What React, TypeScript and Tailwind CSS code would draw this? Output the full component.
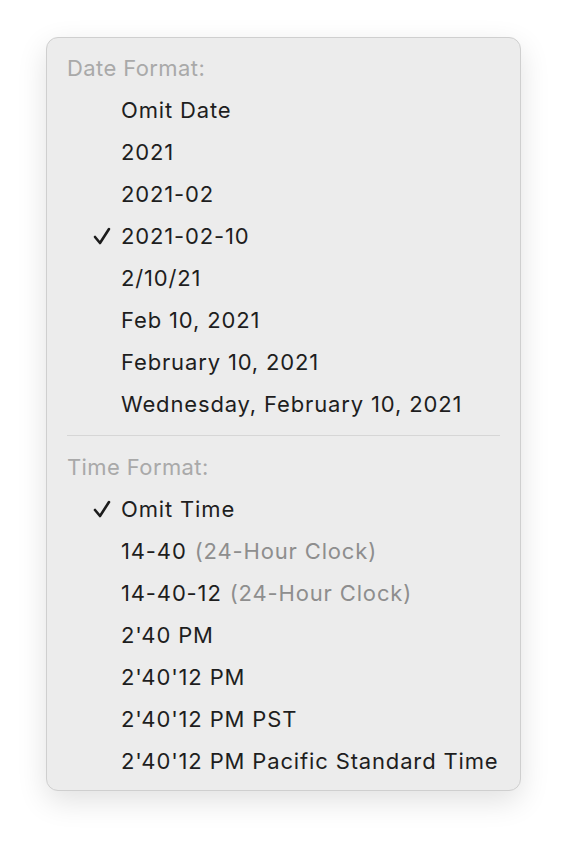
const dateItems = [
  "Omit Date",
  "2021",
  "2021-02",
  "2021-02-10",
  "2/10/21",
  "Feb 10, 2021",
  "February 10, 2021",
  "Wednesday, February 10, 2021",
];

const timeItems: { label: string; note?: string }[] = [
  { label: "Omit Time" },
  { label: "14-40", note: "(24-Hour Clock)" },
  { label: "14-40-12", note: "(24-Hour Clock)" },
  { label: "2'40 PM" },
  { label: "2'40'12 PM" },
  { label: "2'40'12 PM PST" },
  { label: "2'40'12 PM Pacific Standard Time" },
];

const Check = () => (
  <svg width="18" height="18" viewBox="0 0 18 18" className="absolute left-[46px] top-1/2 -translate-y-1/2">
    <path d="M2 10 L7 16 L16 2" fill="none" stroke="#1c1c1c" strokeWidth="2.6" strokeLinecap="round" strokeLinejoin="round" />
  </svg>
);

const Header = ({ text }: { text: string }) => (
  <div className="h-[42px] flex items-center pl-[20px] text-[#a9a9a9] tracking-[0.4px]">{text}</div>
);

const Item = ({ checked, children }: { checked?: boolean; children: React.ReactNode }) => (
  <div className="relative h-[42px] flex items-center pl-[74px] text-[#1e1e1e] whitespace-nowrap">
    {checked && <Check />}
    {children}
  </div>
);

export default function App() {
  return (
    <div className="w-[566px] h-[844px] bg-white pt-[37px] pl-[46px]">
      <div
        className="w-[475px] rounded-[12px] bg-[#ececec] border border-[#cfcfcf] shadow-[0_10px_30px_rgba(0,0,0,0.12)] pt-[9px] pb-[8px] text-[22px] tracking-[0.85px]"
        style={{ fontFamily: "Inter, 'Liberation Sans', sans-serif" }}
      >
        <Header text="Date Format:" />
        {dateItems.map((d) => (
          <Item key={d} checked={d === "2021-02-10"}>
            {d}
          </Item>
        ))}
        <div className="py-[10px] px-[20px]">
          <div className="h-px bg-[#d6d6d6]" />
        </div>
        <Header text="Time Format:" />
        {timeItems.map((t) => (
          <Item key={t.label} checked={t.label === "Omit Time"}>
            {t.label}
            {t.note && <span className="ml-[8px] text-[#8e8e8e]">{t.note}</span>}
          </Item>
        ))}
      </div>
    </div>
  );
}
